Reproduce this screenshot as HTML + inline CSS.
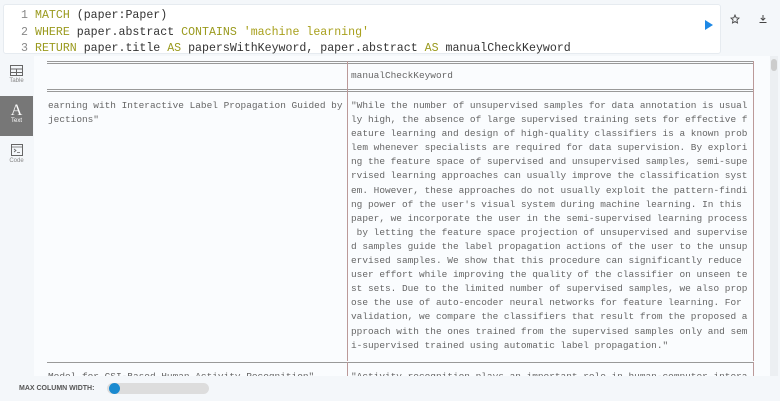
<!DOCTYPE html>
<html><head><style>
body{margin:0;width:780px;height:401px;background:#f4f7fa;position:relative;overflow:hidden;font-family:"Liberation Sans",sans-serif}
.ed{position:absolute;left:3px;top:4px;width:716px;height:48px;background:#fff;border:1px solid #e6ebf0;border-radius:3px}
.code{position:absolute;left:0;top:3px;font:11.6px/16.5px "Liberation Mono",monospace;color:#333;white-space:pre}
.ln{display:inline-block;width:24px;text-align:right;color:#888;margin-right:7px}
.k{color:#9a9a1e}.s{color:#a8a01c}
.side{position:absolute;left:0;top:56px;width:33px;height:320px;background:#f4f7fa}
.tab{position:absolute;left:0;width:33px;height:40px;text-align:center;font-size:6px;color:#888}
.main{position:absolute;left:34px;top:56px;width:736px;height:320px;background:#fafcfe;overflow:hidden}
.t{position:absolute;font:9.45px/14.1px "Liberation Mono",monospace;color:#666;white-space:pre}
.hl{position:absolute;left:13px;width:706px;height:1px;background:#999}
.vl{position:absolute;width:1px;background:#b99}
.sb{position:absolute;left:770px;top:56px;width:8px;height:320px;background:#eceff2}
.bot{position:absolute;left:0;top:376px;width:780px;height:25px;background:#f4f7fa}
</style></head><body>
<div class="ed"><div class="code"><span class="ln">1</span><span class="k">MATCH</span> (paper:Paper)
<span class="ln">2</span><span class="k">WHERE</span> paper.abstract <span class="k">CONTAINS</span> <span class="s">'machine learning'</span>
<span class="ln">3</span><span class="k">RETURN</span> paper.title <span class="k">AS</span> papersWithKeyword, paper.abstract <span class="k">AS</span> manualCheckKeyword</div>
<svg style="position:absolute;left:700px;top:14px" width="10" height="12"><path d="M1 1L9 6L1 11Z" fill="#1e88e5"/></svg>
</div>
<svg style="position:absolute;left:730px;top:14px" width="10" height="10"><path d="M5 1L6.2 3.8L9 4.1L6.9 6L7.5 9L5 7.5L2.5 9L3.1 6L1 4.1L3.8 3.8Z" fill="none" stroke="#444" stroke-width="0.9"/></svg>
<svg style="position:absolute;left:758px;top:14px" width="10" height="10"><path d="M5 1V6M2.8 4L5 6.2L7.2 4M1.5 8.5H8.5" fill="none" stroke="#444" stroke-width="1"/></svg>
<div class="side">
<div class="tab" style="top:5px"><svg width="13" height="11" style="margin-top:4px"><rect x="0.5" y="0.5" width="12" height="10" fill="none" stroke="#666"/><path d="M0.5 4H12.5M0.5 7.5H12.5M6.5 4V10.5" stroke="#666"/></svg><div>Table</div></div>
<div class="tab" style="top:40px;background:#777;color:#fff"><div style="font:16px 'Liberation Serif',serif;margin-top:6px">A</div><div style="margin-top:-2px">Text</div></div>
<div class="tab" style="top:84px"><svg width="12" height="12" style="margin-top:4px"><rect x="0.5" y="0.5" width="11" height="11" fill="none" stroke="#666"/><path d="M0.5 3H11.5M3 5L5 6.5L3 8M6 8.5H9" stroke="#666" fill="none" stroke-width="0.8"/></svg><div>Code</div></div>
</div>
<div class="main">
<div class="hl" style="top:5px"></div><div class="hl" style="top:7px"></div>
<div class="hl" style="top:33px"></div><div class="hl" style="top:35px"></div>
<div class="vl" style="left:313px;top:5px;height:300px"></div>
<div class="vl" style="left:719px;top:5px;height:300px"></div>
<div class="t" style="left:317px;top:13px">manualCheckKeyword</div>
<div class="t" style="left:14px;top:43px">earning with Interactive Label Propagation Guided by
jections"</div>
<div class="t" style="left:317px;top:43px">"While the number of unsupervised samples for data annotation is usual
ly high, the absence of large supervised training sets for effective f
eature learning and design of high-quality classifiers is a known prob
lem whenever specialists are required for data supervision. By explori
ng the feature space of supervised and unsupervised samples, semi-supe
rvised learning approaches can usually improve the classification syst
em. However, these approaches do not usually exploit the pattern-findi
ng power of the user's visual system during machine learning. In this 
paper, we incorporate the user in the semi-supervised learning process
 by letting the feature space projection of unsupervised and supervise
d samples guide the label propagation actions of the user to the unsup
ervised samples. We show that this procedure can significantly reduce 
user effort while improving the quality of the classifier on unseen te
st sets. Due to the limited number of supervised samples, we also prop
ose the use of auto-encoder neural networks for feature learning. For 
validation, we compare the classifiers that result from the proposed a
pproach with the ones trained from the supervised samples only and sem
i-supervised trained using automatic label propagation."</div>
<div class="hl" style="top:306px"></div>
<div class="vl" style="left:313px;top:306px;height:20px"></div>
<div class="vl" style="left:719px;top:306px;height:20px"></div>
<div class="t" style="left:14px;top:314px">Model for CSI-Based Human Activity Recognition"</div>
<div class="t" style="left:317px;top:314px">"Activity recognition plays an important role in human-computer intera</div>
</div>
<div class="sb"><div style="margin:3px 1px;width:6px;height:12px;background:#ccc;border-radius:3px"></div></div>
<div class="bot">
<div style="position:absolute;left:19px;top:9px;font-size:7px;font-weight:bold;color:#555">MAX COLUMN WIDTH:</div>
<div style="position:absolute;left:107px;top:7px;width:102px;height:11px;background:#ddd;border-radius:6px"></div>
<div style="position:absolute;left:109px;top:7px;width:11px;height:11px;background:#1a8ad0;border-radius:50%"></div>
</div>
</body></html>
